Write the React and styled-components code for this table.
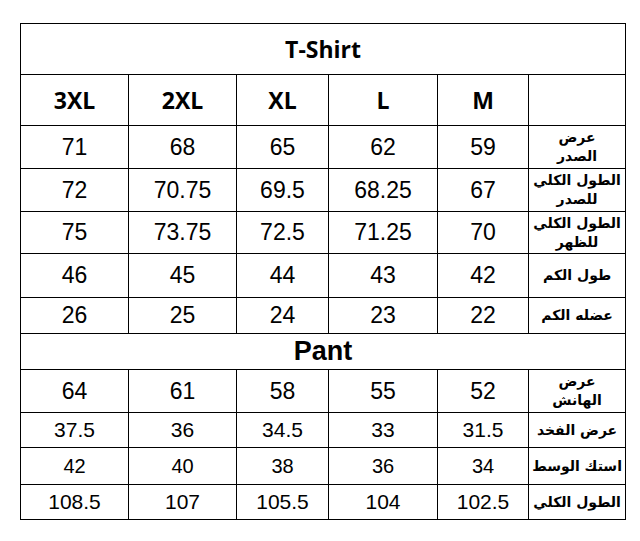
import styled, { createGlobalStyle } from "styled-components";

const GlobalStyle = createGlobalStyle`
body {
  margin: 0;
  background: #fff;
  font-family: "Liberation Sans", Arial, sans-serif;
  color: #000;
}
`;

const Page = styled.div`
padding: 23px 0 0 20px;
`;

const Table = styled.table`
border-collapse: collapse;
table-layout: fixed;
width: 605px;
`;

const Row = styled.tr`
height: ${p => p.h}px;
`;

const Title = styled.td`
border: 1px solid #000;
text-align: center;
padding: 0;
font-family: ${p => (p.arial ? '"Liberation Sans", Arial' : '"Open Sans"')}, sans-serif;
font-weight: 700;
font-size: ${p => p.size}px;
`;

const Size = styled.td`
border: 1px solid #000;
text-align: center;
padding: 0;
font-family: "Open Sans", sans-serif;
font-weight: 700;
font-size: 23px;
`;

const Cell = styled.td`
border: 1px solid #000;
text-align: center;
padding: 0;
font-family: "Liberation Sans", Arial, sans-serif;
font-size: ${p => p.size}px;
`;

const Label = styled.td`
border: 1px solid #000;
text-align: center;
padding: 0 2px;
font-family: "DejaVu Sans", "Noto Sans", sans-serif;
font-weight: 700;
font-size: 14px;
line-height: 19px;
white-space: nowrap;
`;

const widths = [108, 108, 92, 109, 91, 97];
const sizes = ["3XL", "2XL", "XL", "L", "M"];

const shirt = [
  { h: 43, f: 23, label: ["عرض", "الصدر"], v: ["71", "68", "65", "62", "59"] },
  { h: 43, f: 23, label: ["الطول الكلي", "للصدر"], v: ["72", "70.75", "69.5", "68.25", "67"] },
  { h: 42, f: 23, label: ["الطول الكلي", "للظهر"], v: ["75", "73.75", "72.5", "71.25", "70"] },
  { h: 44, f: 23, label: ["طول الكم"], v: ["46", "45", "44", "43", "42"] },
  { h: 36, f: 23, label: ["عضله الكم"], v: ["26", "25", "24", "23", "22"] },
];

const pant = [
  { h: 43, f: 23, label: ["عرض", "الهانش"], v: ["64", "61", "58", "55", "52"] },
  { h: 35, f: 21, label: ["عرض الفخد"], v: ["37.5", "36", "34.5", "33", "31.5"] },
  { h: 37, f: 20, label: ["استك الوسط"], v: ["42", "40", "38", "36", "34"] },
  { h: 35, f: 21, label: ["الطول الكلي"], v: ["108.5", "107", "105.5", "104", "102.5"] },
];

function DataRow({ row }) {
  return (
    <Row h={row.h}>
      {row.v.map((n, i) => (
        <Cell key={i} size={row.f}>{n}</Cell>
      ))}
      <Label dir="rtl">
        {row.label.map((l, i) => (
          <div key={i}>{l}</div>
        ))}
      </Label>
    </Row>
  );
}

export default function App() {
  return (
    <Page>
      <GlobalStyle />
      <Table>
        <colgroup>
          {widths.map((w, i) => (
            <col key={i} style={{ width: w }} />
          ))}
        </colgroup>
        <tbody>
          <Row h={51}>
            <Title colSpan={6} size={23}>T-Shirt</Title>
          </Row>
          <Row h={51}>
            {sizes.map(s => (
              <Size key={s}>{s}</Size>
            ))}
            <Size />
          </Row>
          {shirt.map((r, i) => (
            <DataRow key={i} row={r} />
          ))}
          <Row h={36}>
            <Title colSpan={6} size={27} arial>Pant</Title>
          </Row>
          {pant.map((r, i) => (
            <DataRow key={i} row={r} />
          ))}
        </tbody>
      </Table>
    </Page>
  );
}
